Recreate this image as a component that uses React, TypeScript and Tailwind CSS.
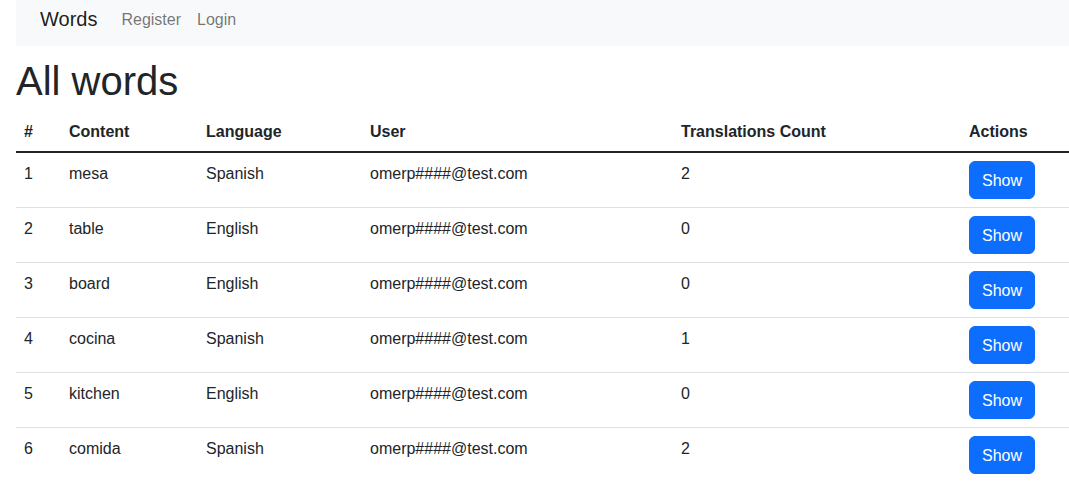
const words = [
  { id: 1, content: "mesa", language: "Spanish", user: "omerp####@test.com", count: 2 },
  { id: 2, content: "table", language: "English", user: "omerp####@test.com", count: 0 },
  { id: 3, content: "board", language: "English", user: "omerp####@test.com", count: 0 },
  { id: 4, content: "cocina", language: "Spanish", user: "omerp####@test.com", count: 1 },
  { id: 5, content: "kitchen", language: "English", user: "omerp####@test.com", count: 0 },
  { id: 6, content: "comida", language: "Spanish", user: "omerp####@test.com", count: 2 },
];

const App = () => {
  return (
    <div className="min-h-screen bg-white pl-4 text-[#212529] font-['Liberation_Sans',Arial,sans-serif]">
      <nav className="flex h-[46px] items-start bg-[#f8f9fa] pl-6 pt-1">
        <a className="mr-4 py-0 text-[20px] leading-[30px] text-black/90">Words</a>
        <a className="px-2 pt-px text-base leading-[30px] text-black/55">Register</a>
        <a className="px-2 pt-px text-base leading-[30px] text-black/55">Login</a>
      </nav>

      <h1 className="mt-[11px] mb-[7px] text-[40px] leading-[48px] font-medium">All words</h1>

      <table className="w-full table-fixed border-collapse text-base leading-6">
        <thead>
          <tr className="border-b-2 border-[#212529]">
            <th className="w-[45px] px-2 pt-2 pb-[7px] text-left font-bold">#</th>
            <th className="w-[137px] px-2 pt-2 pb-[7px] text-left font-bold">Content</th>
            <th className="w-[164px] px-2 pt-2 pb-[7px] text-left font-bold">Language</th>
            <th className="w-[311px] px-2 pt-2 pb-[7px] text-left font-bold">User</th>
            <th className="w-[288px] px-2 pt-2 pb-[7px] text-left font-bold">Translations Count</th>
            <th className="px-2 pt-2 pb-[7px] text-left font-bold">Actions</th>
          </tr>
        </thead>
        <tbody>
          {words.map((w) => (
            <tr key={w.id} className="border-b border-[#dee2e6] align-top">
              <td className="px-2 pt-[9px] pb-[7px]">{w.id}</td>
              <td className="px-2 pt-[9px] pb-[7px]">{w.content}</td>
              <td className="px-2 pt-[9px] pb-[7px]">{w.language}</td>
              <td className="px-2 pt-[9px] pb-[7px]">{w.user}</td>
              <td className="px-2 pt-[9px] pb-[7px]">{w.count}</td>
              <td className="p-2">
                <button className="rounded-[6px] border border-[#0d6efd] bg-[#0d6efd] px-3 pt-[7px] pb-[5px] text-base leading-6 text-white">
                  Show
                </button>
              </td>
            </tr>
          ))}
        </tbody>
      </table>
    </div>
  );
};

export default App;
